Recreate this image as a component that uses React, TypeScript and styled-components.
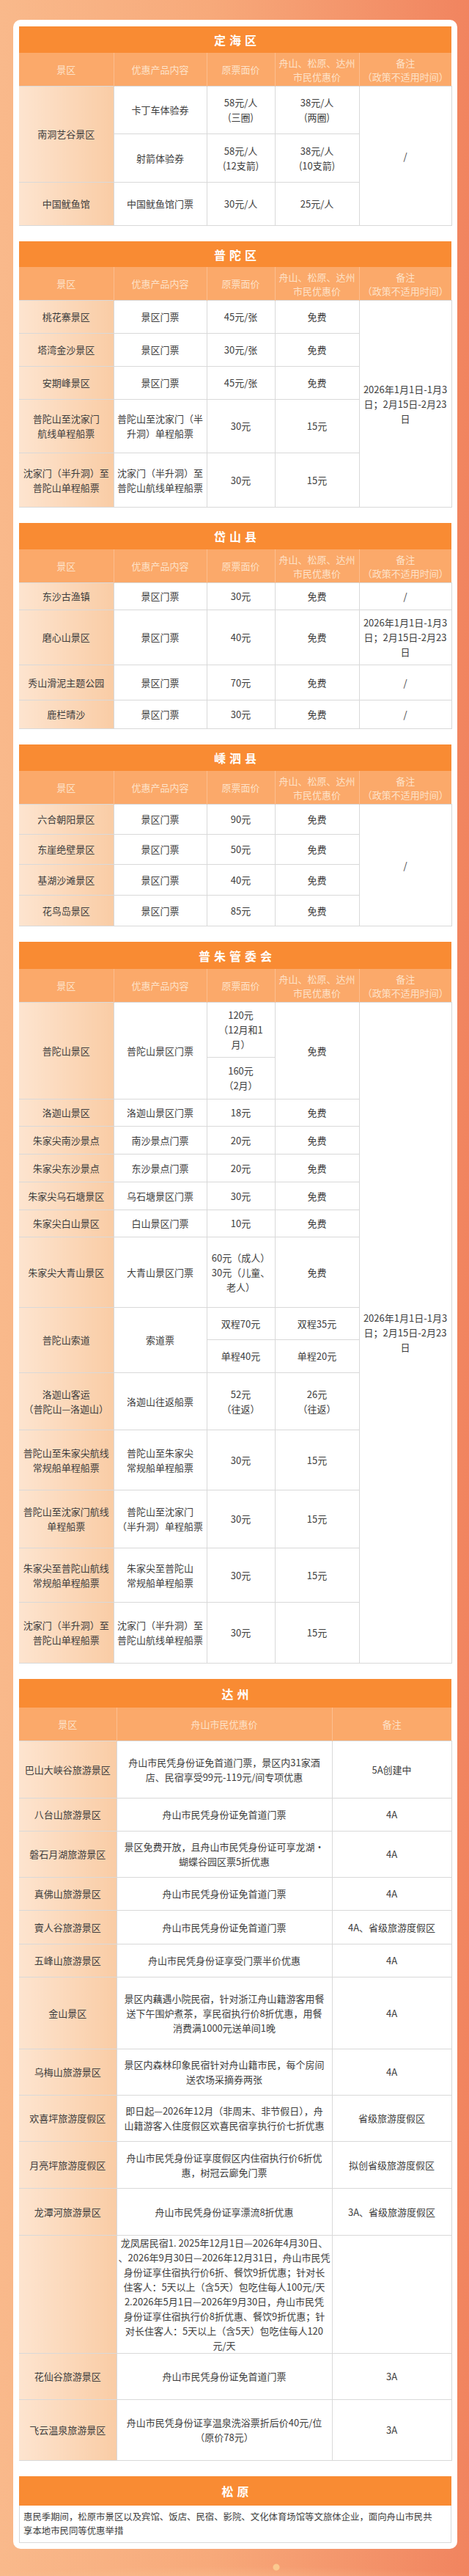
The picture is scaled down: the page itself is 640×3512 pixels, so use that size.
import React from "react";
import styled, { createGlobalStyle } from "styled-components";

const GlobalStyle = createGlobalStyle`
  html, body {
    margin: 0;
    padding: 0;
  }
  body {
    font-family: "Noto Sans CJK SC", "Noto Sans", sans-serif;
    background:
      radial-gradient(circle at 377px calc(100% - 19px), #fbc98f 0, #fbc98f 4px, transparent 5px),
      radial-gradient(ellipse 60% 20px at 50% 100%, rgba(255, 214, 170, 0.35), transparent),
      linear-gradient(90deg, #f9b98b 0%, #f7a97a 45%, #f1845f 100%);
  }
`;

const Page = styled.main`
  padding: 27px 16px 44px 18px;
`;

const Card = styled.div`
  background: #fff;
  border-radius: 10px;
  padding: 9px 8px 8px;
  display: flex;
  flex-direction: column;
  gap: 21px;
`;

const Section = styled.section`
  display: flex;
  flex-direction: column;
`;

const Title = styled.div<{ $h: number }>`
  height: ${(p) => p.$h}px;
  display: flex;
  align-items: center;
  justify-content: center;
  background: #f98b33;
  color: #fff;
  font-size: 16px;
  font-weight: 700;
  letter-spacing: 5px;
  padding-left: 5px;
`;

const Table = styled.table`
  width: 100%;
  table-layout: fixed;
  border-collapse: collapse;
  font-size: 13px;
  color: #3d3d3d;
`;

const Th = styled.th`
  height: 45px;
  padding: 0;
  background: #fba96a;
  color: #fde2c9;
  font-weight: 400;
  line-height: 19px;
  white-space: pre;
  text-align: center;
  border-left: 1px solid rgba(255, 255, 255, 0.25);
  &:first-child {
    border-left: none;
  }
`;

const Tr = styled.tr<{ $h: number }>`
  height: ${(p) => p.$h}px;
`;

const Td = styled.td<{ $lead?: boolean }>`
  padding: 0;
  text-align: center;
  vertical-align: middle;
  line-height: 20px;
  white-space: pre;
  border: 1px solid #d9d9d9;
  border-left: ${(p) => (p.$lead ? "none" : "1px solid #d9d9d9")};
  background: ${(p) =>
    p.$lead ? "linear-gradient(90deg, #fde4cf 0%, #f9cca5 100%)" : "#fff"};
`;

const Note = styled.div`
  padding: 6px 5px;
  font-size: 12.4px;
  line-height: 19px;
  color: #3d3d3d;
  white-space: pre-line;
  border: 1px solid #d9d9d9;
  border-top: none;
`;

const DATE = "2026年1月1日-1月3\n日；2月15日-2月23\n日";

const Cols5 = () => (
  <colgroup>
    <col style={{ width: 129 }} />
    <col style={{ width: 127 }} />
    <col style={{ width: 93 }} />
    <col style={{ width: 115 }} />
    <col style={{ width: 126 }} />
  </colgroup>
);

const Head5 = () => (
  <thead>
    <tr>
      <Th>景区</Th>
      <Th>优惠产品内容</Th>
      <Th>原票面价</Th>
      <Th>{"舟山、松原、达州\n市民优惠价"}</Th>
      <Th>{"备注\n（政策不适用时间）"}</Th>
    </tr>
  </thead>
);

type Row = [number, string, string, string, string];

const simpleRows = (rows: Row[]) =>
  rows.map(([h, a, b, c, d]) => (
    <Tr $h={h} key={a + b}>
      <Td $lead>{a}</Td>
      <Td>{b}</Td>
      <Td>{c}</Td>
      <Td>{d}</Td>
    </Tr>
  ));

const Dinghai = () => (
  <Section>
    <Title $h={36}>定海区</Title>
    <Table>
      <Cols5 />
      <Head5 />
      <tbody>
        <Tr $h={65}>
          <Td $lead rowSpan={2}>南洞艺谷景区</Td>
          <Td>卡丁车体验券</Td>
          <Td>{"58元/人\n(三圈)"}</Td>
          <Td>{"38元/人\n(两圈)"}</Td>
          <Td rowSpan={3}>/</Td>
        </Tr>
        <Tr $h={66}>
          <Td>射箭体验券</Td>
          <Td>{"58元/人\n(12支箭)"}</Td>
          <Td>{"38元/人\n(10支箭)"}</Td>
        </Tr>
        <Tr $h={59}>
          <Td $lead>中国鱿鱼馆</Td>
          <Td>中国鱿鱼馆门票</Td>
          <Td>30元/人</Td>
          <Td>25元/人</Td>
        </Tr>
      </tbody>
    </Table>
  </Section>
);

const Putuo = () => (
  <Section>
    <Title $h={35}>普陀区</Title>
    <Table>
      <Cols5 />
      <Head5 />
      <tbody>
        <Tr $h={45}>
          <Td $lead>桃花寨景区</Td>
          <Td>景区门票</Td>
          <Td>45元/张</Td>
          <Td>免费</Td>
          <Td rowSpan={5}>{DATE}</Td>
        </Tr>
        {simpleRows([
          [45, "塔湾金沙景区", "景区门票", "30元/张", "免费"],
          [45, "安期峰景区", "景区门票", "45元/张", "免费"],
          [73, "普陀山至沈家门\n航线单程船票", "普陀山至沈家门（半\n升洞）单程船票", "30元", "15元"],
          [74, "沈家门（半升洞）至\n普陀山单程船票", "沈家门（半升洞）至\n普陀山航线单程船票", "30元", "15元"],
        ])}
      </tbody>
    </Table>
  </Section>
);

const Daishan = () => (
  <Section>
    <Title $h={36}>岱山县</Title>
    <Table>
      <Cols5 />
      <Head5 />
      <tbody>
        {(
          [
            [37, "东沙古渔镇", "景区门票", "30元", "免费", "/"],
            [75, "磨心山景区", "景区门票", "40元", "免费", DATE],
            [48, "秀山滑泥主题公园", "景区门票", "70元", "免费", "/"],
            [39, "鹿栏晴沙", "景区门票", "30元", "免费", "/"],
          ] as [number, string, string, string, string, string][]
        ).map(([h, a, b, c, d, e]) => (
          <Tr $h={h} key={a}>
            <Td $lead>{a}</Td>
            <Td>{b}</Td>
            <Td>{c}</Td>
            <Td>{d}</Td>
            <Td>{e}</Td>
          </Tr>
        ))}
      </tbody>
    </Table>
  </Section>
);

const Shengsi = () => (
  <Section>
    <Title $h={36}>嵊泗县</Title>
    <Table>
      <Cols5 />
      <Head5 />
      <tbody>
        <Tr $h={41}>
          <Td $lead>六合朝阳景区</Td>
          <Td>景区门票</Td>
          <Td>90元</Td>
          <Td>免费</Td>
          <Td rowSpan={4}>/</Td>
        </Tr>
        {simpleRows([
          [41, "东崖绝壁景区", "景区门票", "50元", "免费"],
          [42, "基湖沙滩景区", "景区门票", "40元", "免费"],
          [42, "花鸟岛景区", "景区门票", "85元", "免费"],
        ])}
      </tbody>
    </Table>
  </Section>
);

const Puzhu = () => (
  <Section>
    <Title $h={37}>普朱管委会</Title>
    <Table>
      <Cols5 />
      <Head5 />
      <tbody>
        <Tr $h={75}>
          <Td $lead rowSpan={2}>普陀山景区</Td>
          <Td rowSpan={2}>普陀山景区门票</Td>
          <Td>{"120元\n（12月和1\n月）"}</Td>
          <Td rowSpan={2}>免费</Td>
          <Td rowSpan={15}>{DATE}</Td>
        </Tr>
        <Tr $h={57}>
          <Td>{"160元\n（2月）"}</Td>
        </Tr>
        {simpleRows([
          [37, "洛迦山景区", "洛迦山景区门票", "18元", "免费"],
          [38, "朱家尖南沙景点", "南沙景点门票", "20元", "免费"],
          [38, "朱家尖东沙景点", "东沙景点门票", "20元", "免费"],
          [38, "朱家尖乌石塘景区", "乌石塘景区门票", "30元", "免费"],
          [37, "朱家尖白山景区", "白山景区门票", "10元", "免费"],
          [96, "朱家尖大青山景区", "大青山景区门票", "60元（成人）\n30元（儿童、\n老人）", "免费"],
        ])}
        <Tr $h={44}>
          <Td $lead rowSpan={2}>普陀山索道</Td>
          <Td rowSpan={2}>索道票</Td>
          <Td>双程70元</Td>
          <Td>双程35元</Td>
        </Tr>
        <Tr $h={45}>
          <Td>单程40元</Td>
          <Td>单程20元</Td>
        </Tr>
        {simpleRows([
          [78, "洛迦山客运\n（普陀山—洛迦山）", "洛迦山往返船票", "52元\n（往返）", "26元\n（往返）"],
          [82, "普陀山至朱家尖航线\n常规船单程船票", "普陀山至朱家尖\n常规船单程船票", "30元", "15元"],
          [79, "普陀山至沈家门航线\n单程船票", "普陀山至沈家门\n（半升洞）单程船票", "30元", "15元"],
          [74, "朱家尖至普陀山航线\n常规船单程船票", "朱家尖至普陀山\n常规船单程船票", "30元", "15元"],
          [83, "沈家门（半升洞）至\n普陀山单程船票", "沈家门（半升洞）至\n普陀山航线单程船票", "30元", "15元"],
        ])}
      </tbody>
    </Table>
  </Section>
);

const dazhouRows: [number, string, string, string][] = [
  [78, "巴山大峡谷旅游景区", "舟山市民凭身份证免首道门票，景区内31家酒\n店、民宿享受99元-119元/间专项优惠", "5A创建中"],
  [45, "八台山旅游景区", "舟山市民凭身份证免首道门票", "4A"],
  [63, "磐石月湖旅游景区", "景区免费开放，且舟山市民凭身份证可享龙湖·\n蝴蝶谷园区票5折优惠", "4A"],
  [45, "真佛山旅游景区", "舟山市民凭身份证免首道门票", "4A"],
  [46, "賨人谷旅游景区", "舟山市民凭身份证免首道门票", "4A、省级旅游度假区"],
  [45, "五峰山旅游景区", "舟山市民凭身份证享受门票半价优惠", "4A"],
  [98, "金山景区", "景区内藕遇小院民宿，针对浙江舟山籍游客用餐\n送下午围炉煮茶，享民宿执行价8折优惠，用餐\n消费满1000元送单间1晚", "4A"],
  [63, "乌梅山旅游景区", "景区内森林印象民宿针对舟山籍市民，每个房间\n送农场采摘券两张", "4A"],
  [63, "欢喜坪旅游度假区", "即日起—2026年12月（非周末、非节假日），舟\n山籍游客入住度假区欢喜民宿享执行价七折优惠", "省级旅游度假区"],
  [64, "月亮坪旅游度假区", "舟山市民凭身份证享度假区内住宿执行价6折优\n惠，树冠云廊免门票", "拟创省级旅游度假区"],
  [64, "龙潭河旅游景区", "舟山市民凭身份证享漂流8折优惠", "3A、省级旅游度假区"],
  [
    160,
    "",
    "龙凤居民宿1. 2025年12月1日—2026年4月30日、\n、2026年9月30日—2026年12月31日，舟山市民凭\n身份证享住宿执行价6折、餐饮9折优惠；针对长\n住客人：5天以上（含5天）包吃住每人100元/天\n2.2026年5月1日—2026年9月30日，舟山市民凭\n身份证享住宿执行价8折优惠、餐饮9折优惠；针\n对长住客人：5天以上（含5天）包吃住每人120\n元/天",
    "",
  ],
  [63, "花仙谷旅游景区", "舟山市民凭身份证免首道门票", "3A"],
  [83, "飞云温泉旅游景区", "舟山市民凭身份证享温泉洗浴票折后价40元/位\n（原价78元）", "3A"],
];

const Dazhou = () => (
  <Section>
    <Title $h={39}>达州</Title>
    <Table>
      <colgroup>
        <col style={{ width: 133 }} />
        <col style={{ width: 294 }} />
        <col style={{ width: 163 }} />
      </colgroup>
      <thead>
        <tr>
          <Th>景区</Th>
          <Th>舟山市民优惠价</Th>
          <Th>备注</Th>
        </tr>
      </thead>
      <tbody>
        {dazhouRows.map(([h, a, b, c], i) => (
          <Tr $h={h} key={i}>
            <Td $lead>{a}</Td>
            <Td>{b}</Td>
            <Td>{c}</Td>
          </Tr>
        ))}
      </tbody>
    </Table>
  </Section>
);

const Songyuan = () => (
  <Section>
    <Title $h={40}>松原</Title>
    <Note>
      {"惠民季期间，松原市景区以及宾馆、饭店、民宿、影院、文化体育场馆等文旅体企业，面向舟山市民共\n享本地市民同等优惠举措"}
    </Note>
  </Section>
);

export default function App() {
  return (
    <>
      <GlobalStyle />
      <Page>
        <Card>
          <Dinghai />
          <Putuo />
          <Daishan />
          <Shengsi />
          <Puzhu />
          <Dazhou />
          <Songyuan />
        </Card>
      </Page>
    </>
  );
}
